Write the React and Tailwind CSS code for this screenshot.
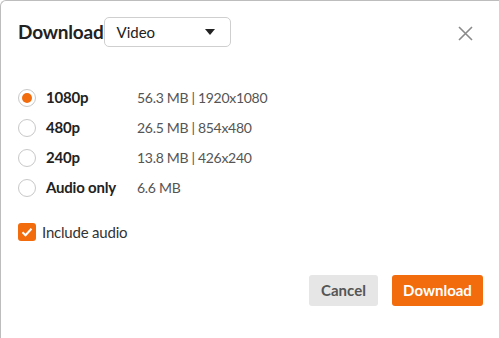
import { useState } from "react";

const options = [
  { id: "1080p", label: "1080p", info: "56.3 MB | 1920x1080" },
  { id: "480p", label: "480p", info: "26.5 MB | 854x480" },
  { id: "240p", label: "240p", info: "13.8 MB | 426x240" },
  { id: "audio", label: "Audio only", info: "6.6 MB" },
];

export default function App() {
  const [quality, setQuality] = useState("1080p");
  const [audio, setAudio] = useState(true);

  return (
    <div className="w-[499px] h-[338px] bg-white border-t border-l border-[#bdbdbd] rounded-tl-[6px] text-[#333] font-['Lato','Liberation_Sans',sans-serif] flex flex-col">
      {/* header */}
      <div className="flex items-center pl-[17px] pr-[26px] pt-[16px]">
        <h1 className="text-[19px] font-bold text-[#222] tracking-[-0.2px]">Download</h1>
        <button className="ml-0 w-[127px] h-[30px] border border-[#cfcfcf] rounded-[5px] flex items-center justify-between pl-[12px] pr-[15px] text-[15px] text-[#222]">
          <span>Video</span>
          <svg width="10" height="6" viewBox="0 0 10 6"><path d="M0 0h10L5 6z" fill="#222" /></svg>
        </button>
        <button className="ml-auto mt-[3px] text-[#888]">
          <svg width="15" height="15" viewBox="0 0 15 15"><path d="M1 1l13 13M14 1L1 14" stroke="#8a8a8a" strokeWidth="1.6" /></svg>
        </button>
      </div>

      {/* options */}
      <div className="flex flex-col gap-[13px] pl-[17px] mt-[42px]">
        {options.map((o) => (
          <label key={o.id} className="flex items-center h-[17px] cursor-pointer" onClick={() => setQuality(o.id)}>
            <span className="w-[18px] h-[18px] rounded-full border border-[#c8c8c8] flex items-center justify-center">
              {quality === o.id && <span className="w-[10px] h-[10px] rounded-full bg-[#f26c0d]" />}
            </span>
            <span className="ml-[10px] w-[91px] text-[15px] font-bold text-[#222] tracking-[-0.2px]">{o.label}</span>
            <span className="text-[14px] text-[#555] tracking-[-0.3px]">{o.info}</span>
          </label>
        ))}
      </div>

      {/* include audio */}
      <label className="flex items-center pl-[17px] mt-[25px] cursor-pointer" onClick={() => setAudio(!audio)}>
        <span className={`w-[18px] h-[18px] rounded-[3px] flex items-center justify-center ${audio ? "bg-[#f26c0d]" : "border border-[#c8c8c8]"}`}>
          {audio && (
            <svg width="12" height="10" viewBox="0 0 12 10"><path d="M1.5 5.2l3 3 6-6.5" stroke="#fff" strokeWidth="2" fill="none" /></svg>
          )}
        </span>
        <span className="ml-[6px] text-[15px] text-[#333] tracking-[-0.2px]">Include audio</span>
      </label>

      {/* actions */}
      <div className="flex justify-end gap-[14px] pr-[16px] mt-auto mb-[32px]">
        <button className="w-[69px] h-[31px] rounded-[3px] bg-[#e6e6e6] text-[15px] font-bold text-[#555]">Cancel</button>
        <button className="w-[91px] h-[31px] rounded-[3px] bg-[#f26c0d] text-[15px] font-bold text-white">Download</button>
      </div>
    </div>
  );
}
